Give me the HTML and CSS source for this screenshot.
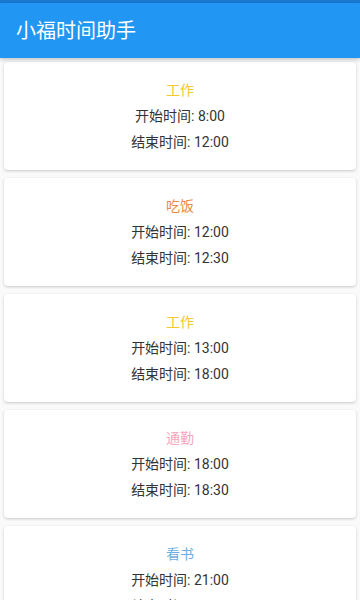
FILE: index.html
```html
<!DOCTYPE html>
<html lang="zh-CN">
<head>
    <meta charset="UTF-8">
    <meta name="viewport" content="width=device-width, initial-scale=1.0">
    <title>小福时间助手</title>
    <link rel="stylesheet" href="styles.css">
</head>
<body>
    <div class="status-bar"></div>
    <header class="app-bar">
        <h1 class="app-title">小福时间助手</h1>
    </header>

    <div class="list">
        <div class="card">
            <p class="task work">工作</p>
            <p class="time">开始时间: 8:00</p>
            <p class="time">结束时间: 12:00</p>
        </div>
        <div class="card">
            <p class="task eat">吃饭</p>
            <p class="time">开始时间: 12:00</p>
            <p class="time">结束时间: 12:30</p>
        </div>
        <div class="card">
            <p class="task work">工作</p>
            <p class="time">开始时间: 13:00</p>
            <p class="time">结束时间: 18:00</p>
        </div>
        <div class="card">
            <p class="task commute">通勤</p>
            <p class="time">开始时间: 18:00</p>
            <p class="time">结束时间: 18:30</p>
        </div>
        <div class="card">
            <p class="task read">看书</p>
            <p class="time">开始时间: 21:00</p>
            <p class="time">结束时间: 22:00</p>
        </div>
    </div>
</body>
</html>
```

FILE: styles.css
```css
body {
    margin: 0;
    background-color: #fafafa;
    font-family: Roboto, "Noto Sans CJK SC", sans-serif;
    color: #333;
}
.status-bar {
    height: 3px;
    background-color: #1a78d0;
}
.app-bar {
    height: 55px;
    background-color: #2196f3;
    display: flex;
    align-items: center;
    padding: 0 16px;
    box-shadow: 0 2px 4px rgba(0, 0, 0, 0.2);
    position: relative;
}
.app-title {
    margin: 0;
    font-size: 20px;
    font-weight: normal;
    color: #fff;
    position: relative;
    top: -1px;
}
.list {
    padding: 4px;
}
.card {
    background: #fff;
    border-radius: 4px;
    box-shadow: 0 1px 3px rgba(0, 0, 0, 0.2);
    padding: 15px 0;
    margin-bottom: 8px;
    text-align: center;
}
.card p {
    margin: 0;
    line-height: 26px;
    font-size: 14px;
}
.time {
    color: #333;
}
.work {
    color: #f7c530;
}
.eat {
    color: #e88a45;
}
.commute {
    color: #f5a5bb;
}
.read {
    color: #6ab0e0;
}
```
